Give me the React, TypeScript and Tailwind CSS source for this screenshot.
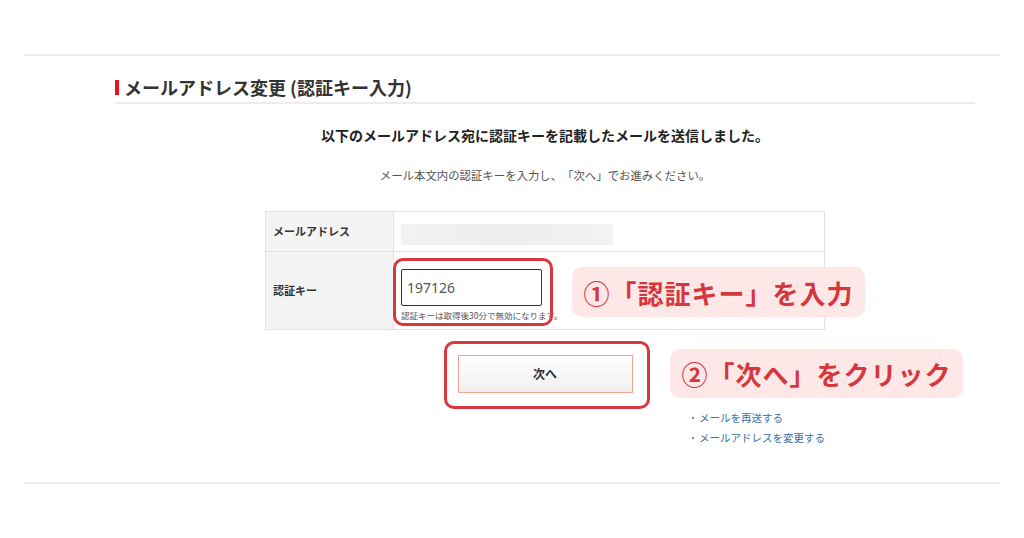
import React from "react";

const jp = { fontFamily: '"Noto Sans CJK JP", "Noto Sans", sans-serif' };

export default function App() {
  return (
    <div className="relative w-[1024px] h-[538px] bg-white text-[#333] [text-spacing-trim:space-all]" style={jp}>
      <div className="pt-[54px] px-[24px]">
        <div className="border-t-2 border-[#eeeeee]" />

        <div className="pl-[91px] pr-[25px]">
          {/* heading */}
          <div className="mt-[18px] pb-[2px] border-b-2 border-[#ececec] flex items-center h-[26px] box-content">
            <span className="w-[4px] h-[15px] bg-[#e3141c] mr-[5px]" />
            <h2 className="text-[18px] font-bold leading-[24px] text-[#333]">メールアドレス変更 (認証キー入力)</h2>
          </div>

          <div className="flex flex-col items-center">
            <p className="mt-[21px] text-[14px] font-bold leading-[20px] text-[#222]">
              以下のメールアドレス宛に認証キーを記載したメールを送信しました。
            </p>
            <p className="mt-[22px] text-[11.4px] leading-[16px] text-[#555]">
              メール本文内の認証キーを入力し、「次へ」でお進みください。
            </p>

            {/* form table */}
            <div className="mt-[28px] w-[560px] border border-[#e3e3e3]">
              <div className="flex h-[40px] border-b border-[#e3e3e3]">
                <div className="w-[128px] bg-[#f4f4f4] border-r border-[#e3e3e3] flex items-center pl-[7px] text-[11px] font-bold">
                  メールアドレス
                </div>
                <div className="flex-1 flex items-center pl-[7px] pt-[6px]">
                  <div className="w-[212px] h-[21px] bg-gradient-to-r from-[#f3f1f1] via-[#eeeeee] to-[#f2f2f2]" />
                </div>
              </div>
              <div className="flex h-[77px]">
                <div className="w-[128px] bg-[#f4f4f4] border-r border-[#e3e3e3] flex items-center pl-[7px] text-[11px] font-bold">
                  認証キー
                </div>
                <div className="flex-1 pl-[7px] pt-[17px]">
                  <div className="w-[141px] h-[37px] border-[1.5px] border-[#333] rounded-[2px] flex items-center pl-[5px] text-[14px] text-[#555]" style={{ fontFamily: '"Noto Sans", sans-serif' }}>
                    197126
                  </div>
                  <p className="mt-[3px] text-[8.5px] leading-[12px] text-[#555] whitespace-nowrap">認証キーは取得後30分で無効になります。</p>
                </div>
              </div>
            </div>

            {/* next button */}
            <button className="mt-[25px] w-[175px] h-[38px] border border-[#eaa594] bg-gradient-to-b from-white to-[#efefef] text-[12px] font-bold text-[#333]">
              次へ
            </button>

            {/* links */}
            <div className="w-[560px] flex justify-end mt-[15px]">
              <ul className="w-[133px] text-[10.5px] leading-[20px] text-[#3a6ea5] whitespace-nowrap">
                <li className="flex items-center">
                  <span className="w-[2px] h-[2px] bg-[#888] mr-[5px]" />
                  メールを再送する
                </li>
                <li className="flex items-center">
                  <span className="w-[2px] h-[2px] bg-[#888] mr-[5px]" />
                  メールアドレスを変更する
                </li>
              </ul>
            </div>
          </div>
        </div>

        <div className="mt-[34px] border-t-2 border-[#eeeeee]" />
      </div>

      {/* annotations */}
      <div className="absolute left-[393px] top-[258px] w-[160px] h-[68px] border-[3px] border-[#d8383e] rounded-[10px]" />
      <div className="absolute left-[444px] top-[341px] w-[206px] h-[68px] border-[3px] border-[#d8383e] rounded-[10px]" />

      <div className="absolute left-[572px] top-[267px] w-[293px] h-[50px] bg-[#fde7e7] rounded-[10px] flex items-center justify-center text-[26px] font-bold text-[#d6373d] tracking-[1px]">
        ①「認証キー」を入力
      </div>
      <div className="absolute left-[670px] top-[349px] w-[293px] h-[49px] bg-[#fde7e7] rounded-[10px] flex items-center justify-center text-[26px] font-bold text-[#d6373d] tracking-[1px]">
        ②「次へ」をクリック
      </div>
    </div>
  );
}
